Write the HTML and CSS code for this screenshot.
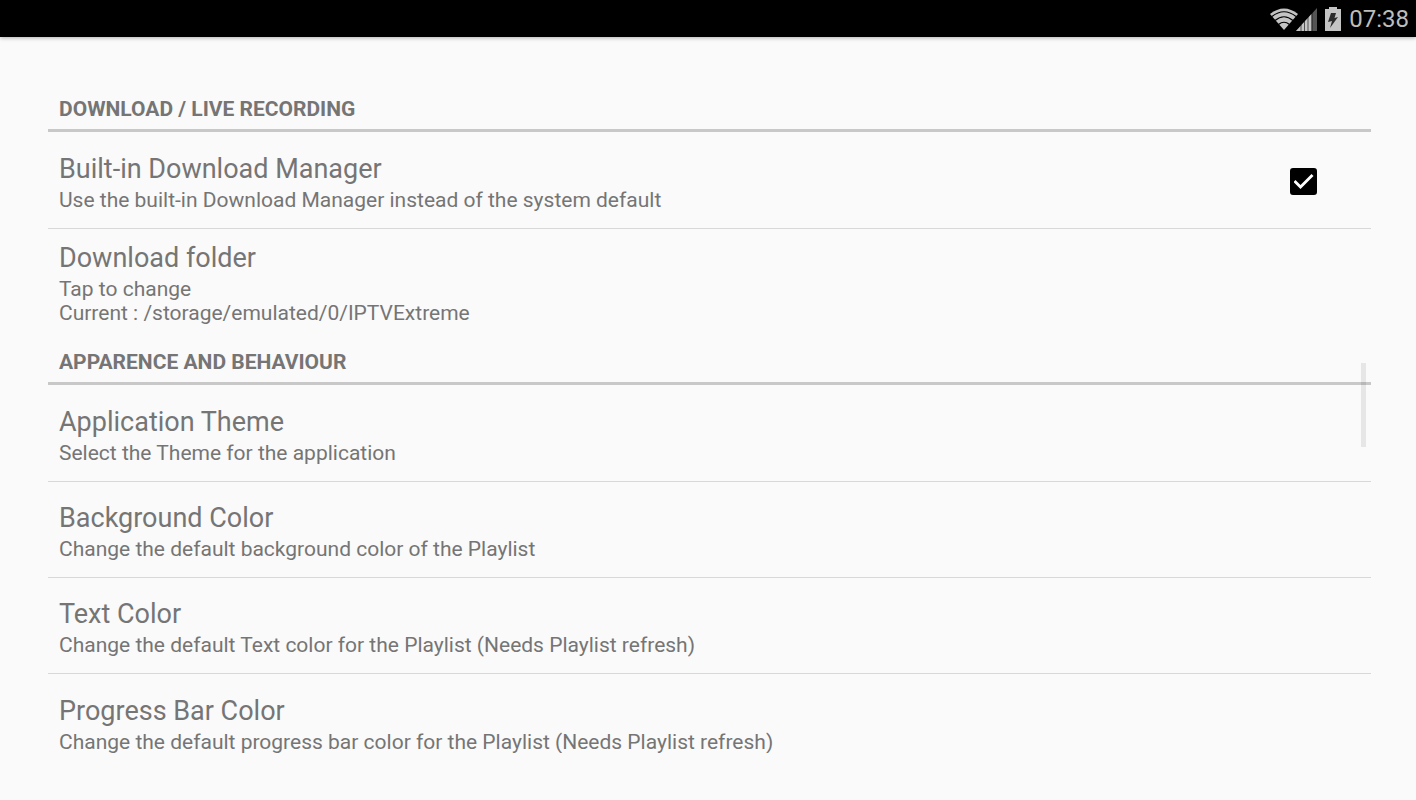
FILE: index.html
```html
<!DOCTYPE html>
<html lang="en">
<head>
    <meta charset="UTF-8">
    <meta name="viewport" content="width=device-width, initial-scale=1.0">
    <title>Settings</title>
    <link rel="stylesheet" href="styles.css">
</head>
<body>
    <header class="status-bar">
        <svg class="icon-wifi" viewBox="0 0 28 22" aria-hidden="true">
            <path d="M14 22 L0 6 Q14 -5 28 6 Z" fill="#c4c4c4"/>
            <path d="M2 8.500 Q14 -1 26 8.500 M5 12.500 Q14 5 23 12.500 M8.500 16.500 Q14 12 19.500 16.500" fill="none" stroke="#000" stroke-width="1.2"/>
        </svg>
        <svg class="icon-signal" viewBox="0 0 21 24" aria-hidden="true">
            <path d="M0 24 L21 1 V24 Z" fill="#555"/>
            <path d="M0 24 L15.500 7 V24 Z" fill="#c4c4c4"/>
            <path d="M5 18 V24 M8.500 14 V24 M12 10 V24 M16 5 V24" stroke="#000" stroke-width="0.6"/>
        </svg>
        <svg class="icon-battery" viewBox="0 0 16 24" aria-hidden="true">
            <path d="M4 0 H12 V2 H16 V24 H0 V2 H4 Z" fill="#c4c4c4"/>
            <path d="M6 6 H11 L9.500 11 L13 10 L5 21 L7 14 L3 15 Z" fill="#2b2b2b"/>
        </svg>
        <time class="clock">07:38</time>
    </header>
    <main class="preferences">
        <h2 class="category">Download / Live Recording</h2>
        <label class="preference divided" for="builtinManager">
            <span class="preference-text">
                <span class="title">Built-in Download Manager</span>
                <span class="summary">Use the built-in Download Manager instead of the system default</span>
            </span>
            <input type="checkbox" class="checkbox" id="builtinManager" checked>
        </label>
        <div class="preference">
            <div class="preference-text">
                <span class="title">Download folder</span>
                <span class="summary">Tap to change<br>Current : /storage/emulated/0/IPTVExtreme</span>
            </div>
        </div>
        <h2 class="category">Apparence and Behaviour</h2>
        <div class="preference divided">
            <div class="preference-text">
                <span class="title">Application Theme</span>
                <span class="summary">Select the Theme for the application</span>
            </div>
        </div>
        <div class="preference divided">
            <div class="preference-text">
                <span class="title">Background Color</span>
                <span class="summary">Change the default background color of the Playlist</span>
            </div>
        </div>
        <div class="preference divided">
            <div class="preference-text">
                <span class="title">Text Color</span>
                <span class="summary">Change the default Text color for the Playlist (Needs Playlist refresh)</span>
            </div>
        </div>
        <div class="preference">
            <div class="preference-text">
                <span class="title">Progress Bar Color</span>
                <span class="summary">Change the default progress bar color for the Playlist (Needs Playlist refresh)</span>
            </div>
        </div>
        <div class="scroll-thumb"></div>
    </main>
</body>
</html>
```
FILE: styles.css
```css
* {
    margin: 0;
    padding: 0;
    box-sizing: border-box;
}

body {
    height: 100vh;
    display: flex;
    flex-direction: column;
    font-family: Roboto, "Noto Sans", sans-serif;
    background: #fafafa;
    color: #757575;
    overflow: hidden;
}

.status-bar {
    flex: none;
    height: 37px;
    padding-right: 7px;
    display: flex;
    align-items: center;
    justify-content: flex-end;
    background: #000000;
    color: #bdbdbd;
    box-shadow: 0 1px 4px rgba(0, 0, 0, 0.3);
}

.icon-wifi {
    width: 28px;
    height: 22px;
}

.icon-signal {
    width: 21px;
    height: 24px;
    margin-left: -2px;
}

.icon-battery {
    width: 16px;
    height: 24px;
    margin: 0 8px;
}

.clock {
    font-size: 24px;
    line-height: 36px;
}

.preferences {
    flex: 1;
    min-height: 0;
    margin: 44px 45px 47px 48px;
    position: relative;
    overflow: hidden;
}

.category {
    height: 51px;
    margin-bottom: 1px;
    padding: 15px 11px 0;
    border-bottom: 3px solid #c8c8c8;
    font-size: 21px;
    line-height: 26px;
    font-weight: 700;
    text-transform: uppercase;
}

.preference {
    min-height: 96px;
    padding: 11px 11px 9px;
    display: flex;
    align-items: center;
    justify-content: space-between;
}

.divided {
    border-bottom: 1px solid #d8d8d8;
}

.title,
.summary {
    display: block;
}

.title {
    font-size: 27px;
    line-height: 37px;
}

.summary {
    font-size: 21px;
    line-height: 24px;
}

.checkbox {
    appearance: none;
    width: 27px;
    height: 27px;
    margin-right: 43px;
    border: 2px solid #000000;
    border-radius: 3px;
    display: grid;
    place-items: center;
}

.checkbox:checked {
    background: #000000;
}

.checkbox:checked::before {
    content: "";
    width: 20px;
    height: 15px;
    background: #ffffff;
    clip-path: polygon(0 8px, 2px 6px, 7px 11px, 18px 0, 20px 2px, 7px 15px);
}

/* sits over the list, like the system scroll indicator */
.scroll-thumb {
    position: absolute;
    top: 42%;
    right: 5px;
    width: 5px;
    height: 84px;
    background: rgba(0, 0, 0, 0.08);
}
```
